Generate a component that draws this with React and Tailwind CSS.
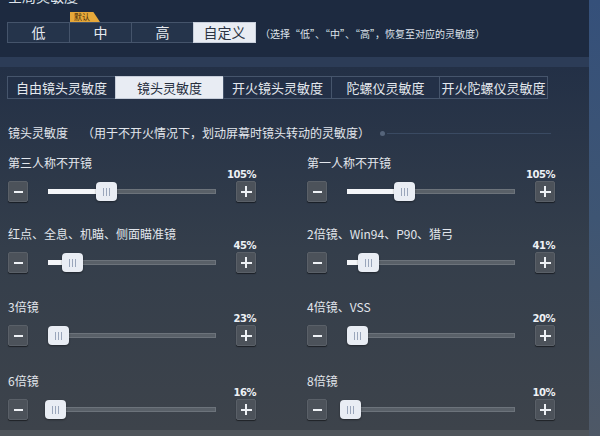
import React from 'react';

const presets = ['低', '中', '高', '自定义'];
const tabs = ['自由镜头灵敏度', '镜头灵敏度', '开火镜头灵敏度', '陀螺仪灵敏度', '开火陀螺仪灵敏度'];

// thumb offset (px from track start) is taken from the screenshot, game curve is not linear
const rows = [
  [
    { label: '第三人称不开镜', value: '105%', pos: 48 },
    { label: '第一人称不开镜', value: '105%', pos: 47 },
  ],
  [
    { label: '红点、全息、机瞄、侧面瞄准镜', value: '45%', pos: 14 },
    { label: '2倍镜、Win94、P90、猎弓', value: '41%', pos: 11 },
  ],
  [
    { label: '3倍镜', value: '23%', pos: 0 },
    { label: '4倍镜、VSS', value: '20%', pos: 0 },
  ],
  [
    { label: '6倍镜', value: '16%', pos: -3 },
    { label: '8倍镜', value: '10%', pos: -7 },
  ],
];
const rowGaps = ['mt-0', 'mt-[24px]', 'mt-[26px]', 'mt-[27px]'];

const StepButton = ({ plus }) => (
  <div className="w-[20px] h-[21px] rounded-[2px] bg-[#4c525a] border border-[#5a6068] shadow-[0_1px_1px_rgba(0,0,0,0.5)] flex items-center justify-center shrink-0">
    {plus ? (
      <div className="relative w-[11px] h-[11px]">
        <div className="absolute left-0 top-[4.5px] w-[11px] h-[2px] bg-[#eef1f5]" />
        <div className="absolute top-0 left-[4.5px] h-[11px] w-[2px] bg-[#eef1f5]" />
      </div>
    ) : (
      <div className="w-[9px] h-[2px] bg-[#eef1f5]" />
    )}
  </div>
);

const Slider = ({ pos }) => (
  <div className="relative w-[168px] h-[21px] flex items-center">
    <div className="w-full h-[5px] bg-[#596068] border border-[#6c737b]" />
    <div className="absolute left-0 top-[8px] h-[5px] bg-[#f4f6f9]" style={{ width: Math.max(pos + 4, 0) }} />
    <div
      className="absolute top-[1px] w-[21px] h-[19px] rounded-[4px] bg-[#e9edf4] shadow-[0_1px_2px_rgba(0,0,0,0.4)] flex items-center justify-center gap-[2px]"
      style={{ left: pos }}
    >
      <span className="w-[1px] h-[8px] bg-[#9aa6bb]" />
      <span className="w-[1px] h-[8px] bg-[#9aa6bb]" />
      <span className="w-[1px] h-[8px] bg-[#9aa6bb]" />
    </div>
  </div>
);

const SensRow = ({ item }) => (
  <div className="w-[248px] flex flex-col">
    <div className="h-[15px] text-[12px] leading-[15px] text-[#e2e6ec] whitespace-nowrap">{item.label}</div>
    <div className="h-[11px] mt-[-1px] text-right text-[10px] leading-[11px] font-bold tracking-tighter text-[#eef1f5] font-['DejaVu_Sans',sans-serif]">
      {item.value}
    </div>
    <div className="mt-[1px] flex items-center gap-[20px]">
      <StepButton />
      <Slider pos={item.pos} />
      <StepButton plus />
    </div>
  </div>
);

export default function App() {
  return (
    <div className="w-[600px] h-[436px] overflow-hidden flex bg-[#2c3c57] font-['Noto_Sans_CJK_SC','Noto_Sans',sans-serif]">
      <div className="w-[589px] flex flex-col">
        {/* 全局灵敏度 */}
        <div className="h-[57px] bg-[#1d2a40] px-[7px] flex flex-col">
          <div className="mt-[-11px] h-[14px] text-[14px] leading-[14px] text-[#dfe4ec] pl-[1px]">全局灵敏度</div>
          <div className="mt-[19px] flex items-center">
            <div className="flex">
              {presets.map((p, i) => (
                <div
                  key={p}
                  className={
                    'relative w-[63px] h-[21px] flex items-center justify-center text-[14px] border ' +
                    (i === 3
                      ? 'bg-[#e8ecf3] text-[#2a3242] border-[#c9d0dc]'
                      : 'bg-[#25344b] text-[#e6eaf0] border-[#45546b]') +
                    (i > 0 ? ' -ml-px' : '')
                  }
                >
                  {p}
                  {i === 1 && (
                    <div className="absolute left-0 top-[-11px] h-[10px] w-[30px] bg-[#e6a83a] text-[8px] leading-[10px] text-[#4a2e08] pl-[4px] [clip-path:polygon(0_0,78%_0,100%_100%,0_100%)]">
                      默认
                    </div>
                  )}
                </div>
              ))}
            </div>
            <div className="ml-[4px] mt-[2px] text-[10px] text-[#dfe4ec] whitespace-nowrap">
              （选择“低”、“中”、“高”，恢复至对应的灵敏度）
            </div>
          </div>
        </div>

        <div className="h-[10px] bg-[#2c3c57]" />

        {/* 镜头灵敏度 */}
        <div className="flex-1 bg-gradient-to-b from-[#233046] via-[#343e4b] to-[#3d434b] px-[7px] pt-[9px]">
          <div className="flex">
            {tabs.map((t, i) => (
              <div
                key={t}
                className={
                  'w-[109px] h-[23px] flex items-center justify-center text-[13px] border ' +
                  (i === 1
                    ? 'bg-[#e8ecf3] text-[#252d3c] border-[#c6cdd9]'
                    : 'bg-[#233047] text-[#e4e8ee] border-[#46556c]') +
                  (i > 0 ? ' -ml-px' : '')
                }
              >
                {t}
              </div>
            ))}
          </div>

          <div className="mt-[27px] flex items-center pl-[1px]">
            <span className="text-[12px] leading-[14px] text-[#e2e6ec] whitespace-nowrap">
              镜头灵敏度<span className="ml-[14px]">（用于不开火情况下，划动屏幕时镜头转动的灵敏度）</span>
            </span>
            <span className="ml-[10px] w-[5px] h-[5px] rounded-full bg-[#55647a]" />
            <span className="ml-[2px] w-[164px] h-px bg-[#3a4a62]" />
          </div>

          <div className="mt-[15px] flex flex-col pl-[1px]">
            {rows.map((r, i) => (
              <div key={i} className={'flex gap-[51px] ' + rowGaps[i]}>
                <SensRow item={r[0]} />
                <SensRow item={r[1]} />
              </div>
            ))}
          </div>
        </div>
        <div className="h-[6px] bg-[#4f555b]" />
      </div>
      <div className="flex-1 bg-gradient-to-b from-[#35507a] via-[#3e5573] to-[#4e5866]" />
    </div>
  );
}
